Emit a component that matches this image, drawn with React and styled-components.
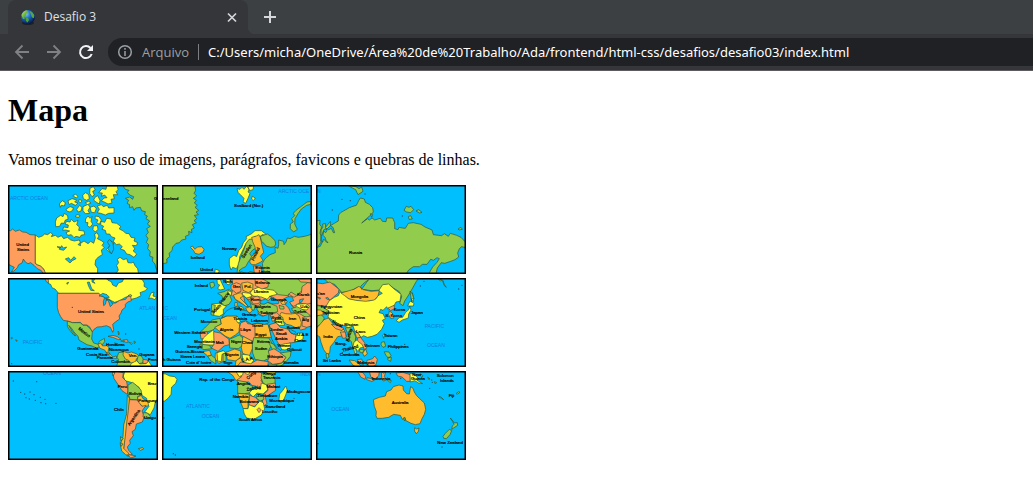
import React from "react";
import styled, { createGlobalStyle } from "styled-components";

const GlobalStyle = createGlobalStyle`
  body { margin: 0; background: #fff; }
`;

const uiFont = `"Open Sans", "Noto Sans", sans-serif`;

const TabStrip = styled.div`
  display: flex;
  align-items: flex-end;
  height: 34px;
  background: #3c4043;
`;

const Tab = styled.div`
  display: flex;
  align-items: center;
  box-sizing: border-box;
  width: 240px;
  height: 34px;
  margin-left: 8px;
  padding: 0 8px 0 12px;
  gap: 8px;
  background: #35363a;
  border-radius: 8px 8px 0 0;
  font: 12px/16px ${uiFont};
  color: #dfe1e5;
`;

const TabTitle = styled.span`
  flex: 1;
`;

const Flare = styled.div`
  width: 8px;
  height: 8px;
  background: radial-gradient(circle at 100% 0, #3c4043 8px, #35363a 9px);
`;

const IconButton = styled.button`
  display: flex;
  align-items: center;
  justify-content: center;
  width: ${(p) => p.$size || 16}px;
  height: ${(p) => p.$size || 16}px;
  padding: 0;
  border: 0;
  background: none;
  color: ${(p) => (p.disabled ? "#7f8185" : "#f1f3f4")};
`;

const TabButton = styled(IconButton)`
  color: #d5d7da;
`;

const NewTab = styled(TabButton)`
  margin: 0 0 3px 0;
`;

const Toolbar = styled.div`
  display: flex;
  align-items: center;
  box-sizing: border-box;
  height: 37px;
  padding-left: 6px;
  background: #35363a;
  border-bottom: 1px solid #5d5b60;
`;

const AddressBar = styled.div`
  display: flex;
  align-items: center;
  flex: 1;
  height: 28px;
  margin-left: 6px;
  padding-left: 9px;
  gap: 9px;
  background: #202124;
  border-radius: 14px 0 0 14px;
  font: 13px/20px ${uiFont};
  color: #9aa0a6;
`;

const Divider = styled.span`
  width: 1px;
  height: 16px;
  background: #7b7e82;
`;

const Address = styled.input`
  flex: 1;
  min-width: 0;
  padding: 0;
  border: 0;
  outline: 0;
  background: none;
  color: #fff;
  font: 13px/20px "Noto Sans", "Open Sans", sans-serif;
`;

const Page = styled.main`
  padding: 21px 8px;
  font: 16px/18px "Liberation Serif", "Times New Roman", serif;
  color: #000;
`;

const Heading = styled.h1`
  margin: 0 0 22px;
  font-size: 32px;
  line-height: 37px;
`;

const Intro = styled.p`
  margin: 0 0 16px;
`;

const MapGrid = styled.div`
  display: grid;
  grid-template-columns: repeat(3, 150px);
  gap: 4px;
`;

const Tile = styled.svg`
  display: block;
  width: 150px;
  height: 89px;
  background: #00bfff;
`;

const Y = "#ffff42";
const G = "#92cc4c";
const C = "#ff9d5c";
const A = "#ffbc2c";
const O = "#00bfff";
const SEA = "#0f7ce0";

// Shapes are [fill, path]; labels are [x, y, text, colour, angle].
const tiles = [
  {
    name: "Canadá e Alasca",
    origin: [24, 15],
    shapes: [
      [C, "M20 150L32 152 38 147 46 154 58 150 68 156 78 157 90 164 106 165 106 250 112 254 122 258 132 268 140 280 132 284 124 272 112 266 102 256 92 248 84 251 76 246 70 237 66 249 56 254 52 263 42 273 34 276 43 262 35 258 24 252Z"],
      [Y, "M106 165L116 172 127 168 134 162 143 164 151 158 158 162 154 170 166 166 174 172 184 167 191 176 202 172 212 180 223 183 238 180 242 190 252 183 264 191 272 184 281 190 286 174 284 162 291 158 297 168 292 176 304 182 312 188 306 196 313 203 304 210 307 224 295 231 287 240 285 254 293 266 292 284 138 284 132 268 122 258 112 254 106 250Z"],
      [Y, "M352 238L360 232 370 239 380 236 384 248 394 249 400 246 405 257 413 266 416 284 346 284 355 270 350 256 356 248Z"],
      [Y, "M303 124L314 127 320 115 333 117 336 128 350 130 362 139 358 147 370 153 377 160 387 161 393 172 405 174 402 183 413 188 409 197 397 196 405 207 399 212 410 222 402 232 390 224 380 222 373 211 361 207 367 200 358 192 349 194 340 184 345 174 334 170 329 162 319 162 316 151 306 148 311 139 302 134Z"],
      [Y, "M296 38L306 26 318 28 320 18 352 18 354 29 348 35 353 44 340 44 343 56 333 58 336 69 324 72 313 66 304 63 312 54 321 53 314 45 304 49 307 39Z"],
      [Y, "M292 78L304 74 310 80 322 76 326 84 342 83 342 99 326 100 316 105 302 100 292 98 298 88Z"],
      [Y, "M170 114L182 106 189 110 193 100 203 107 204 118 196 120 192 130 184 129 179 139 167 140 166 126Z"],
      [Y, "M200 124L210 126 214 118 222 126 234 121 230 134 238 141 236 151 252 153 254 164 244 165 240 172 228 169 222 173 214 164 203 166 198 158 209 153 197 150 188 151 191 141 204 143 205 135 195 132Z"],
      [Y, "M257 117L264 108 270 115 276 109 273 124 278 132 270 142 262 137 264 128 256 127ZM286 108L297 110 304 120 298 133 290 128 294 120 285 116ZM280 138L292 137 294 148 286 156 279 149Z"],
      [Y, "M178 72L187 62 196 68 193 78 184 76 181 82ZM198 88L210 80 220 83 218 91 210 96 202 94ZM204 62L216 56 230 60 224 66 234 69 226 76 214 70 207 74ZM230 88L239 76 246 83 242 94 234 96ZM249 80L264 73 270 82 264 92 269 100 256 101 249 92ZM270 82L282 78 289 86 284 98 274 97Z"],
      [Y, "M248 45L257 38 266 44 268 56 260 61 250 56ZM270 25L280 20 286 30 278 34 283 45 276 50 269 40ZM285 52L293 47 300 61 298 72 288 66 281 60ZM218 47L227 43 234 49 229 54ZM256 68L266 64 273 69 262 74ZM238 58L246 62 242 68 236 65ZM319 208L328 200 336 208 330 217ZM334 184L342 188 338 195ZM230 104L240 106 236 112 226 110Z"],
      [G, "M369 18L478 18 478 275 468 265 465 252 457 243 459 232 449 228 451 215 443 206 446 194 439 187 444 176 438 166 445 157 440 146 451 139 442 132 449 123 438 116 442 108 434 104 436 95 425 92 421 82 407 84 402 91 398 80 388 83 389 74 381 70 386 61 376 55 389 51 398 58 401 50 389 45 382 37 387 31 376 28Z"],
      [O, "M178 208L185 197 190 204 200 201 191 211 182 209ZM196 237L206 233 212 241 222 230 228 236 217 242 210 249ZM171 200L181 201 179 205ZM234 194L240 188 242 197ZM322 186L329 178 339 190 341 208 334 222 324 206 329 197Z"],
    ],
    labels: [[30, 60, "ARCTIC OCEAN", SEA], [49, 199, "United"], [51, 213, "States"], [462, 61, "G"]],
  },
  {
    name: "Atlântico Norte e Escandinávia",
    origin: [6, 15],
    shapes: [
      [G, "M0 15L104 15 107 31 102 40 110 48 100 55 109 61 103 69 112 76 105 82 116 91 108 96 115 104 103 106 110 116 102 122 109 128 97 134 103 144 94 148 96 158 86 154 87 164 76 169 78 177 65 180 58 188 48 190 38 201 36 212 27 220 29 230 20 237 21 248 10 251 0 246Z"],
      [A, "M96 207L91 202 97 198 105 208 112 201 125 200 132 208 129 216 117 223 105 220 101 212Z"],
      [Y, "M231 26L240 28 246 22 252 28 260 18 268 28 264 36 270 40 264 55 257 70 249 66 252 55 240 43 234 37ZM263 19L281 18 279 29 268 32ZM277 49L286 54 280 62 275 57Z"],
      [Y, "M208 236L222 225 230 230 236 212 245 202 250 188 260 176 258 170 275 161 285 152 304 152 322 166 306 164 298 172 284 169 276 180 258 191 251 205 239 230 237 252 229 266 218 262 213 270 208 255Z"],
      [G, "M258 190L267 178 279 177 290 191 290 203 278 210 269 221 276 231 265 245 257 260 248 264 239 270 235 285 230 285 235 251 245 225 252 208Z"],
      [A, "M275 172L289 168 297 164 301 173 306 196 311 217 301 229 309 241 301 247 286 254 275 254 269 246 274 230 287 216 285 201 278 185Z"],
      [G, "M301 169L322 162 332 169 345 182 347 192 343 200 332 202 318 198 312 190 305 185Z"],
      [G, "M320 232L330 224 346 218 345 202 354 205 356 194 356 180 371 184 372 194 378 186 382 174 390 176 403 169 415 172 434 169 454 163 460 164 460 285 311 285 307 250 314 238Z"],
      [G, "M391 146L401 156 412 148 404 132 405 116 414 101 424 87 440 76 452 73 454 64 441 66 424 79 408 91 400 100 404 107 395 116 400 126 391 132Z"],
      [C, "M280 258L302 258 306 276 298 285 284 285Z"],
      [Y, "M166 267L178 272 173 285 164 280Z"],
      [G, "M240 285L242 275 262 281 270 274 286 279 290 285Z"],
    ],
    labels: [[9, 61, "eenland"], [222, 80, "Svalbard (Nor.)"], [355, 40, "ARCTIC OCE", SEA], [92, 237, "Iceland"], [186, 210, "Norway"], [121, 272, "United"], [251, 236, "Sweden", "#000", -58], [281, 243, "Finland", "#000", -64], [286, 266, "Estonia"], [296, 278, "Latvia"]],
  },
  {
    name: "Rússia",
    origin: [6, 15],
    shapes: [
      [G, "M0 278L0 124 18 121 17 133 22 140 20 184 27 186 25 173 18 160 20 148 27 143 26 132 35 131 34 143 41 134 49 124 49 137 61 130 73 123 74 105 81 97 94 90 106 83 120 78 127 76 134 62 139 54 151 57 154 67 166 73 176 83 178 96 170 105 153 120 143 129 161 116 166 120 174 114 182 120 199 115 205 124 216 125 218 114 236 114 242 128 242 146 252 149 255 142 265 144 274 145 283 130 298 128 321 133 333 141 354 150 358 164 383 167 391 161 403 169 409 160 428 166 441 172 452 184 460 191 460 204 443 200 436 206 431 219 434 231 423 239 410 244 392 250 382 248 370 264 365 285 345 280 356 261 369 247 376 236 369 233 358 241 350 238 339 253 325 253 317 260 298 260 284 270 275 284 0 284Z"],
      [G, "M104 17L115 24 125 29 132 44 147 34 143 21 135 26 126 20ZM270 91L277 79 285 82 291 79 299 89 290 98 278 96ZM306 93L314 89 324 97 317 99ZM283 110L290 107 295 117 285 118ZM432 147L441 142 445 148 435 150ZM169 101L176 104 173 112Z"],
      [O, "M49 137L57 142 62 158 58 158 52 145 44 149 35 145 39 152 35 158 29 153 27 166 33 172 36 181 42 188 38 187 29 177 19 199 10 202 22 185 22 169 30 148 39 147Z"],
    ],
    dots: [[84, 58], [55, 90], [109, 62], [153, 42], [265, 108]],
    labels: [[9, 39, "N", SEA], [105, 223, "Russia"]],
  },
  {
    name: "América do Norte e Central",
    origin: [12, 12],
    shapes: [
      [Y, "M127 12L132 28 140 31 144 41 153 45 164 58 284 58 292 67 306 69 318 78 332 85 347 80 362 71 374 66 382 76 397 72 411 65 408 56 424 50 430 43 420 37 421 27 414 16 392 12 360 12 355 23 343 27 337 38 326 33 322 23 312 19 304 10Z"],
      [C, "M160 58L284 58 294 67 308 72 303 80 317 76 320 88 335 87 347 79 365 76 371 67 380 66 382 80 371 84 364 91 364 100 354 108 351 117 345 126 347 135 334 144 326 151 329 167 326 175 319 160 307 155 293 158 280 159 270 166 264 174 258 160 249 153 237 153 229 145 205 146 190 141 178 139 170 128 164 116 160 101 160 80Z"],
      [G, "M190 141L205 146 229 146 237 154 247 154 258 163 265 174 263 195 269 207 283 211 286 202 301 193 302 203 294 213 285 219 277 222 264 216 249 212 235 204 225 198 222 187 210 174 202 162 194 154 204 172 215 185 210 184 197 168 190 157Z"],
      [A, "M282 211L290 207 296 216 308 215 315 220 312 232 318 240 310 242 302 228 288 223ZM307 234L317 239 326 249 337 246 338 253 324 252 314 244Z"],
      [G, "M344 236L356 234 361 241 374 238 378 246 387 253 389 263 382 285 334 285 340 270 344 257 339 250Z"],
      [A, "M358 232L372 237 382 234 399 240 405 247 397 255 395 265 381 267 374 259 364 255 357 243Z"],
      [G, "M403 244L412 246 418 256 417 266 405 269 399 259Z"],
      [C, "M417 256L430 258 434 267 417 269Z"],
      [Y, "M382 268L398 260 407 270 426 269 434 262 444 277 462 279 462 285 374 285Z"],
      [Y, "M434 75L441 57 450 54 447 66 457 69 453 77 441 72ZM372 65L380 61 384 66Z"],
      [C, "M312 187L327 184 340 188 351 196 344 197 326 190ZM359 198L370 197 373 205 361 204Z"],
      [G, "M350 201L359 198 360 204ZM331 207L342 209 337 212ZM390 201L395 204 391 209Z"],
      [A, "M342 171L346 177 344 183ZM376 205L385 208 382 212Z"],
      [O, "M264 10L272 15 268 22 273 28 264 24ZM250 25L256 24 263 44 271 50 260 49 254 37ZM285 66L296 58 309 62 316 70 304 72 296 67ZM301 73L308 75 304 91 299 95 298 83ZM309 76L321 81 326 91 319 98 314 83ZM188 27L194 25 190 31Z"],
      [C, "M122 12L132 12 134 26 127 23ZM22 190L26 192 22 195ZM35 197L40 200 37 202Z"],
    ],
    dots: [[205, 100], [365, 180], [405, 225], [23, 269]],
    labels: [[222, 118, "United States"], [222, 166, "Mexico", "#000", 38], [406, 108, "ATLAN", SEA], [56, 210, "PACIFIC", SEA], [220, 227, "Guatemala"], [306, 217, "Honduras"], [315, 232, "Nicaragua"], [246, 246, "Costa Rica"], [278, 256, "Panama"], [322, 268, "Colombia"], [374, 250, "Ven."], [406, 246, "Guyana"], [432, 261, "Fren"]],
  },
  {
    name: "Europa, África e Oriente Médio",
    origin: [6, 12],
    shapes: [
      [C, "M216 12L460 12 460 156 440 154 438 164 422 168 396 143 369 131 344 119 310 126 294 118 296 101 270 98 235 84 214 62 219 42Z"],
      [G, "M298 12L411 12 422 24 441 25 460 30 460 55 424 52 409 64 393 54 383 65 355 62 342 52 324 48 294 40Z"],
      [C, "M385 60L402 70 424 57 426 38 443 26 460 28 460 86 438 91 419 87 401 97 386 88Z"],
      [G, "M173 58L192 53 206 46 216 52 210 66 215 79 207 91 192 96 183 84 191 77 185 65Z"],
      [Y, "M155 90L177 88 199 97 190 106 190 120 178 127 165 125 154 119Z"],
      [G, "M155 91L166 94 161 124 153 122Z"],
      [C, "M213 33L229 26 242 31 243 52 229 58 221 51 213 45Z"],
      [A, "M245 27L263 24 279 30 278 48 265 56 249 49Z"],
      [Y, "M276 48L297 39 318 45 342 49 352 61 331 66 321 76 304 69 279 66 271 57Z"],
      [C, "M285 12L306 14 326 25 324 39 306 45 286 35Z"],
      [A, "M220 63L241 56 251 66 240 72 254 86 266 98 257 97 240 84 226 76Z"],
      [Y, "M247 55L270 58 276 67 260 72 249 67ZM204 49L215 55 213 65 204 59Z"],
      [C, "M270 71L294 66 303 78 295 89 279 90 274 79Z"],
      [G, "M254 74L270 77 275 91 286 93 282 109 270 106 262 88ZM299 90L322 85 351 97 353 113 328 120 298 116 290 105Z"],
      [Y, "M171 17L180 15 189 35 194 45 180 48 173 43 179 33 172 29ZM196 12L209 14 214 26 204 33 199 28Z"],
      [G, "M149 27L161 24 164 36 153 43Z"],
      [O, "M303 80L316 75 325 80 335 70 328 67 340 70 357 83 355 89 340 90 324 85 312 91 300 89ZM372 74L384 68 396 68 401 80 389 84 396 96 402 101 403 116 393 117 386 102 376 92 382 82ZM419 77L431 74 426 83 419 88Z"],
      [A, "M358 78L373 80 377 91 366 91ZM360 122L364 115 377 119 393 120 406 118 417 126 424 145 422 159 407 161 393 154 380 151 368 140Z"],
      [Y, "M410 91L438 89 448 97 441 108 423 106 406 104Z"],
      [G, "M394 104L411 98 434 110 450 124 443 133 419 119 405 118ZM357 94L372 98 372 105 360 105Z"],
      [G, "M344 141L357 135 370 138 368 130 356 124 348 128Z"],
      [C, "M330 121L350 116 358 123 354 136 337 142ZM428 130L460 125 460 154 440 160 426 156Z"],
      [Y, "M345 137L368 137 374 154 358 154 344 146Z"],
      [C, "M328 152L348 146 361 160 383 165 393 178 408 182 404 205 389 207 373 216 353 212 344 195 334 176Z"],
      [Y, "M357 214L376 209 391 207 391 222 375 228 361 226ZM412 177L430 177 429 195 416 202 404 205 407 190Z"],
      [G, "M120 175L134 162 146 150 156 138 180 133 184 150 169 158 159 168 141 174Z"],
      [A, "M181 135L202 125 232 125 232 141 239 151 237 174 226 183 210 193 195 186 164 160 184 150Z"],
      [Y, "M229 128L241 126 242 143 234 147 228 138Z"],
      [C, "M242 147L258 140 263 149 278 151 285 146 288 197 276 202 240 182 238 163Z"],
      [A, "M285 149L309 150 324 151 332 178 335 190 285 191Z"],
      [C, "M120 174L142 173 142 184 132 194 123 195Z"],
      [Y, "M130 192L143 180 158 169 167 176 162 213 134 213 124 207Z"],
      [C, "M161 173L181 177 207 196 208 212 192 216 174 232 154 222 162 211Z"],
      [G, "M208 196L238 183 250 193 247 215 235 224 209 222Z"],
      [A, "M249 187L278 202 277 224 268 246 248 238 244 221Z"],
      [G, "M281 191L326 192 337 209 326 229 331 251 310 261 285 256 278 237 277 212Z"],
      [G, "M326 205L340 210 350 224 338 228ZM120 210L148 214 155 224 132 227 120 221Z"],
      [C, "M325 231L342 224 359 235 379 250 366 267 338 271 323 260 329 248Z"],
      [G, "M361 237L393 232 391 247 374 268 349 285 340 274 366 267 378 250Z"],
      [A, "M128 233L149 229 154 243 143 246ZM166 237L190 231 190 263 176 268 165 254ZM198 235L224 225 242 231 242 249 229 261 202 257Z"],
      [Y, "M171 236L190 230 197 237 186 241 184 263 173 261ZM246 241L265 243 282 257 272 274 250 263Z"],
      [G, "M143 247L154 244 166 253 168 270 152 260ZM189 240L198 237 198 263 189 265Z"],
      [A, "M228 260L242 251 250 264 243 285 224 285ZM327 270L350 273 350 285 323 285Z"],
      [C, "M225 285L242 264 272 269 291 258 325 263 322 285Z"],
      [O, "M213 103L231 98 242 107 263 111 272 122 284 128 295 121 308 127 326 120 327 146 314 151 293 147 275 151 258 140 242 143 231 126 199 126 185 132 190 123 200 110ZM326 154L336 170 352 203 365 225 362 230 347 217 335 195ZM384 158L396 169 408 174 402 181 391 175ZM251 64L270 85 275 101 265 98 254 83Z"],
      [A, "M235 96L246 98 253 106 242 107ZM225 85L232 86 231 98 224 96ZM257 103L270 98 277 109 270 117 263 113Z"],
    ],
    labels: [[9, 108, "IC", SEA], [9, 139, "CEAN", SEA], [104, 39, "Ireland"], [190, 27, "Neth"], [218, 43, "Ger."], [253, 42, "Pol."], [286, 31, "Belarus"], [281, 58, "Ukraine"], [412, 66, "Kazak"], [184, 91, "France", "#000", -52], [102, 111, "Portugal"], [159, 119, "Spain", "#000", -42], [222, 108, "Italy"], [333, 82, "Georgia"], [300, 119, "Turkey"], [272, 80, "Rom."], [284, 101, "Bulgaria"], [246, 126, "Greece"], [273, 143, "Lebanon"], [220, 137, "Tunisia"], [122, 147, "Morocco"], [43, 181, "Western Sahara"], [179, 170, "Algeria"], [241, 172, "Libya"], [277, 160, "Israel"], [286, 186, "Egypt"], [334, 134, "Syria"], [344, 148, "Iraq"], [386, 139, "Iran"], [380, 165, "Kuwait"], [330, 171, "Jordan"], [347, 184, "Saudi"], [345, 198, "Arabia"], [411, 187, "U.A.E"], [404, 203, "Oman"], [401, 117, "Turkm."], [421, 103, "Uzb."], [427, 140, "Afg"], [103, 206, "Mauritania"], [80, 221, "Senegal"], [46, 237, "Guinea-Bissau"], [61, 251, "Sierra Leone"], [9, 262, "h Guiana"], [78, 270, "Cote d' Ivoire"], [167, 211, "Mali"], [213, 208, "Niger"], [246, 211, "Chad"], [195, 245, "Nigeria"], [291, 208, "Eritrea"], [284, 229, "Sudan"], [322, 252, "Ethiopia"], [351, 218, "Yemen"], [382, 230, "Djibouti"], [369, 270, "Somalia"], [189, 270, "Togo"], [245, 264, "C.A.R.", "#000", -12]],
  },
  {
    name: "Ásia Oriental",
    origin: [6, 12],
    shapes: [
      [G, "M26 10L316 10 307 22 296 42 282 66 272 81 267 95 257 88 263 68 256 53 238 42 228 34 212 32 199 48 174 50 145 46 130 40 106 53 83 55 62 31 43 26Z"],
      [C, "M0 26L26 29 48 24 75 46 73 57 60 68 48 79 44 94 28 97 0 91Z"],
      [Y, "M46 80L61 70 73 65 78 54 89 58 103 74 130 78 166 80 186 74 192 65 205 58 194 50 206 32 224 30 239 44 261 61 258 82 246 84 238 99 223 108 218 98 207 109 200 106 195 116 207 119 214 134 205 139 211 149 203 166 189 181 174 187 160 190 149 185 141 190 132 178 122 170 117 156 103 161 88 154 67 152 58 140 42 130 45 113 33 102Z"],
      [A, "M81 57L102 51 120 46 135 37 148 47 171 52 196 50 192 66 181 78 155 82 125 79 104 74 92 65Z"],
      [G, "M0 93L28 98 35 106 45 110 42 119 25 114 0 113ZM0 130L21 121 31 132 23 151 13 155 0 163Z"],
      [A, "M0 107L19 108 38 120 21 123 0 127ZM12 158L30 137 43 132 52 143 63 157 81 161 92 169 83 186 71 188 59 206 49 218 47 237 41 243 29 227 21 205 17 188 0 180 0 167Z"],
      [C, "M52 151L66 153 89 162 84 170 65 164ZM79 174L94 174 97 192 86 193Z"],
      [G, "M94 162L108 161 118 172 116 186 125 196 118 207 112 195 104 204 96 191 101 179ZM36 240L43 238 45 249 38 254Z"],
      [G, "M103 173L118 171 125 188 123 211 116 219 112 203 105 196Z"],
      [Y, "M120 204L130 197 144 203 150 219 138 222 132 233 125 223 128 245 123 240 117 217Z"],
      [C, "M129 194L138 188 151 205 159 222 151 226 144 211 132 202ZM222 102L240 94 242 104 230 110ZM129 257L143 255 148 272 137 267ZM159 259L176 254 182 246 190 256 186 272 170 282 157 269Z"],
      [A, "M122 172L133 178 140 190 128 192ZM155 225L160 240 150 247 146 237ZM105 258L122 260 139 273 148 285 132 285 116 272Z"],
      [G, "M135 226L149 226 147 236 139 236ZM202 205L211 203 215 217 207 220 201 213ZM211 233L225 234 231 245 224 253 215 243ZM222 250L232 250 230 262 221 257Z"],
      [A, "M226 111L235 117 240 132 230 133 224 122Z"],
      [Y, "M247 140L255 131 266 130 275 115 285 106 287 96 291 108 284 120 283 132 265 138 255 145ZM281 96L288 81 300 88 298 96ZM206 183L212 178 209 193ZM295 56L299 72 298 83 291 75Z"],
      [G, "M288 51L294 59 300 74 292 75 293 84ZM386 19L391 31 397 40 390 34ZM371 13L384 18 379 21Z"],
      [O, "M164 17L158 25 148 39 143 46 140 37 151 26ZM35 72L41 70 47 78 40 76ZM10 69L20 72 17 76Z"],
    ],
    dots: [[319, 36], [330, 22], [444, 34], [434, 45], [272, 211], [85, 236]],
    labels: [[9, 64, "s'an"], [110, 72, "Mongolia"], [119, 134, "China"], [20, 102, "Kyrgyzstan"], [23, 119, "Tajikistan"], [53, 145, "Nepal", "#000", 28], [91, 155, "Bhutan"], [28, 193, "India"], [126, 177, "Laos"], [64, 213, "Bang."], [104, 203, "Burma", "#000", -74], [86, 234, "Thailand", "#000", -16], [77, 247, "Cambodia"], [150, 218, "Vietnam"], [221, 221, "Philippines"], [210, 188, "Taiwan"], [239, 112, "Korea"], [214, 129, "S. Korea"], [291, 119, "Japan"], [26, 265, "Sri Lanka"], [130, 269, "Malaysia"], [332, 163, "PACIFIC", SEA], [339, 219, "OCEAN", SEA]],
  },
  {
    name: "América do Sul",
    origin: [12, 9],
    shapes: [
      [Y, "M363 9L466 9 466 87 454 101 450 120 439 140 422 132 435 115 430 108 428 91 411 80 405 58 381 43 363 38 358 24Z"],
      [C, "M334 9L358 14 356 29 368 41 372 67 370 79 354 68 343 51 330 32 327 18Z"],
      [G, "M372 51L386 43 401 55 411 66 414 81 401 85 401 96 378 94 372 75Z"],
      [A, "M401 87L412 82 417 92 431 99 434 113 418 117 402 103Z"],
      [C, "M376 95L399 96 414 115 426 112 414 129 421 145 415 162 397 168 394 184 384 191 388 203 377 217 379 226 370 237 374 247 385 259 371 265 359 246 362 205 366 162 370 131Z"],
      [A, "M370 81L376 91 373 128 368 165 364 205 359 241 371 253 379 264 365 260 353 249 349 230 357 206 359 171 368 137Z"],
      [G, "M418 134L430 135 439 145 433 153 417 147ZM349 206L358 211 351 219ZM348 224L357 228 352 235Z"],
      [A, "M403 242L416 239 419 243 409 247ZM325 12L333 14 327 24Z"],
      [C, "M371 260L387 262 396 264 380 270Z"],
    ],
    dots: [[28, 39], [98, 41], [50, 73], [62, 78], [66, 89], [78, 72], [76, 93], [90, 80], [94, 97], [109, 88], [111, 104], [123, 94], [125, 107], [156, 106]],
    labels: [[117, 22, "OCEAN", SEA], [341, 59, "Peru"], [375, 81, "Bolivia"], [431, 51, "Braz"], [403, 102, "Paraguay"], [330, 130, "Chile"], [377, 174, "Argentina", "#000", -55], [420, 154, "Urugu"]],
  },
  {
    name: "África Austral",
    origin: [6, 9],
    shapes: [
      [Y, "M0 16L17 18 29 24 44 26 51 34 47 46 35 57 33 79 24 91 14 99 0 100Z"],
      [C, "M219 9L299 9 310 23 303 38 313 49 317 62 304 66 289 55 276 52 266 42 235 42 227 26Z"],
      [A, "M199 9L241 9 233 20 245 26 228 38 218 22Z"],
      [Y, "M252 9L271 9 265 20 257 17ZM313 9L342 9 348 14 343 21 325 17ZM228 11L250 9 248 21 238 26Z"],
      [G, "M306 15L337 18 345 33 345 48 325 55 310 46 303 30ZM233 37L257 42 270 51 278 55 273 74 254 77 233 76Z"],
      [Y, "M268 75L276 65 289 60 301 64 304 45 319 50 324 64 309 78 291 75 279 87Z"],
      [C, "M321 49L346 45 347 67 329 79 316 88 321 107 306 118 308 96 298 91 313 77 324 67Z"],
      [G, "M290 80L309 81 312 94 301 99 290 91Z"],
      [A, "M233 76L268 79 268 90 264 102 264 121 250 122 244 108Z"],
      [C, "M269 82L286 88 299 102 283 115 266 114Z"],
      [Y, "M249 122L264 122 267 110 284 117 299 99 310 104 314 123 304 141 282 154 260 150 253 138Z"],
      [C, "M291 125L297 119 304 126 297 134Z"],
      [Y, "M377 54L382 67 377 81 370 98 362 103 357 94 359 78 368 68Z"],
    ],
    dots: [[40, 257], [46, 261], [402, 91], [12, 150]],
    labels: [[421, 24, "INDI", SEA], [118, 39, "Rep. of the Congo"], [264, 35, "Congo", "#000", -42], [310, 22, "Kenya"], [309, 34, "Tanzania"], [230, 52, "Angola"], [260, 69, "Zambia", "#000", -10], [320, 61, "Malawi"], [218, 89, "Namibia"], [292, 88, "Zimbabwe"], [239, 104, "Botswana"], [328, 101, "Mozambique"], [380, 76, "Madagascar"], [316, 121, "Swaziland"], [306, 134, "Lesotho"], [236, 159, "South Africa"], [78, 119, "ATLANTIC", SEA], [125, 150, "OCEAN", SEA]],
  },
  {
    name: "Austrália e Nova Zelândia",
    origin: [6, 9],
    shapes: [
      [A, "M178 95L196 88 214 84 218 71 231 66 238 56 255 51 267 54 268 66 278 77 286 78 290 56 297 61 301 72 307 82 316 91 331 105 335 124 331 139 323 154 318 167 304 170 291 166 276 158 272 148 265 154 259 142 239 139 224 148 204 151 189 151 186 143 187 131 181 115Z"],
      [A, "M302 179L308 183 315 180 313 190 307 197 302 190Z"],
      [C, "M131 10L147 14 155 25 153 34 140 27ZM159 29L172 32 181 37 173 40 158 35ZM166 10L196 12 194 23 184 33 171 28ZM202 10L208 16 215 12 211 26 218 36 207 39 203 28ZM246 15L266 13 289 20 289 40 278 40 264 27 251 24Z"],
      [Y, "M288 16L300 19 313 30 308 36 326 47 314 45 302 38 289 42Z"],
      [G, "M319 17L327 23 323 30ZM341 27L348 33 344 34ZM361 41L368 44 363 47ZM426 77L434 71 438 73 431 78ZM374 86L381 87 389 95 383 92ZM267 151L273 149 273 159ZM217 34L232 38 229 44Z"],
      [G, "M409 150L416 158 421 165 430 164 431 172 420 179 413 184 415 174 420 169 416 161ZM387 205L394 196 406 184 413 188 408 200 397 212 389 211Z"],
    ],
    dots: [[229, 17], [260, 31], [353, 36], [355, 43], [347, 61], [12, 227], [384, 237]],
    labels: [[9, 25, "N", SEA], [173, 37, "Indonesia"], [295, 24, "New"], [291, 37, "Guinea"], [368, 27, "Solomon"], [378, 41, "Islands"], [404, 86, "Fiji"], [233, 109, "Australia"], [52, 130, "OCEAN", SEA], [370, 227, "New Zealand"]],
  },
];

function MapTile({ name, origin: [x, y], shapes, labels, dots = [] }) {
  return (
    <Tile viewBox={`${x} ${y} 450 267`} role="img" aria-label={name}>
      <g stroke="#2f5238" strokeWidth="2" strokeLinejoin="round">
        {shapes.map(([fill, d], i) => <path key={i} fill={fill} d={d} />)}
      </g>
      {dots.map(([cx, cy]) => <circle key={`${cx}-${cy}`} cx={cx} cy={cy} r="2" fill="#14506c" />)}
      <g fontFamily="Liberation Sans, Arial, sans-serif">
        {labels.map(([lx, ly, text, color = "#000", angle = 0]) => (
          <text
            key={`${lx}-${ly}`}
            x={lx}
            y={ly}
            fill={color}
            stroke={color === SEA ? "none" : color}
            strokeWidth="0.6"
            fontSize={color === SEA ? 15 : 13}
            transform={`rotate(${angle} ${lx} ${ly})`}
          >
            {text}
          </text>
        ))}
      </g>
      <rect x={x + 2} y={y + 2} width="446" height="263" fill="none" stroke="#000" strokeWidth="5" />
    </Tile>
  );
}

const Globe = () => (
  <svg width="16" height="16" viewBox="0 0 16 16" aria-hidden="true">
    <defs>
      <radialGradient id="sea" cx="35%" cy="28%" r="75%">
        <stop offset="0" stopColor="#8ccdf5" />
        <stop offset=".45" stopColor="#1b6ac6" />
        <stop offset="1" stopColor="#06163e" />
      </radialGradient>
      <linearGradient id="land" x1="0" y1="0" x2="1" y2="1">
        <stop offset="0" stopColor="#c9e88a" />
        <stop offset=".5" stopColor="#6cb83a" />
        <stop offset="1" stopColor="#2c7a2c" />
      </linearGradient>
    </defs>
    <ellipse cx="8" cy="14" rx="6" ry="2" fill="#1c2024" />
    <circle cx="8" cy="8" r="7" fill="url(#sea)" />
    <path d="M1.5 6Q3 2 7 1.2L8 3 6.500 4.500 6 6.500 4 8 5 10 3 10Z" fill="url(#land)" />
    <path d="M6 9L8 9 9 11 7.500 13.500 6 12Z" fill="#4ba239" />
    <path d="M9.500 2L12 3 14.300 6 14 9 12 8.500 11 5.500Z" fill="#5aa63c" />
  </svg>
);

const Stroke = ({ d, size = 16, width = 2 }) => (
  <svg width={size} height={size} viewBox="0 0 16 16" fill="none" stroke="currentColor" strokeWidth={width} aria-hidden="true">
    <path d={d} />
  </svg>
);

export default function App() {
  return (
    <>
      <GlobalStyle />
      <header>
        <TabStrip>
          <Tab>
            <Globe />
            <TabTitle>Desafio 3</TabTitle>
            <TabButton aria-label="Fechar guia"><Stroke d="M4 4.500L12 12.500M12 4.500L4 12.500" width={1.7} /></TabButton>
          </Tab>
          <Flare />
          <NewTab aria-label="Nova guia" $size={28}><Stroke d="M8 2V14M2 8H14" /></NewTab>
        </TabStrip>
        <Toolbar>
          <IconButton aria-label="Voltar" $size={32} disabled><Stroke d="M15 8H2.500M8.500 1.500L2 8L8.500 14.500" width={1.8} /></IconButton>
          <IconButton aria-label="Avançar" $size={32} disabled><Stroke d="M1 8H13.500M7.500 1.500L14 8L7.500 14.500" width={1.8} /></IconButton>
          <IconButton aria-label="Recarregar" $size={32}>
            <svg width="16" height="16" viewBox="0 0 16 16" aria-hidden="true">
              <path d="M12.500 4A6 6 0 1 0 13.700 10" fill="none" stroke="currentColor" strokeWidth="2" />
              <path d="M15 1V7H9Z" fill="currentColor" />
            </svg>
          </IconButton>
          <AddressBar>
            <Stroke d="M8 1.700A6.300 6.300 0 1 1 8 14.300A6.300 6.300 0 1 1 8 1.700M8 7V12M8 4V5.700" width={1.5} />
            <label htmlFor="address">Arquivo</label>
            <Divider />
            <Address id="address" readOnly value="C:/Users/micha/OneDrive/Área%20de%20Trabalho/Ada/frontend/html-css/desafios/desafio03/index.html" />
          </AddressBar>
        </Toolbar>
      </header>
      <Page>
        <Heading>Mapa</Heading>
        <Intro>Vamos treinar o uso de imagens, parágrafos, favicons e quebras de linhas.</Intro>
        <MapGrid>
          {tiles.map((tile) => <MapTile key={tile.name} {...tile} />)}
        </MapGrid>
      </Page>
    </>
  );
}
